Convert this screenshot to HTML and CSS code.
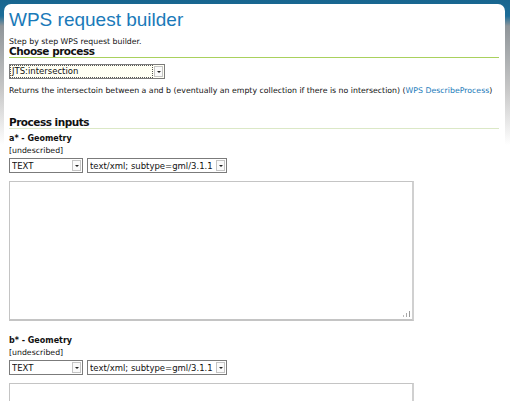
FILE: index.html
```html
<!DOCTYPE html>
<html>
<head>
<meta charset="utf-8">
<link rel="stylesheet" href="styles.css">
</head>
<body>
<div class="panel">
  <h1 class="title">WPS request builder</h1>
  <p class="intro">Step by step WPS request builder.</p>
  <h2 class="section section-process">Choose process</h2>
  <div class="row">
    <div class="select select-process focused"><span class="val">JTS:intersection</span><span class="arrow"></span></div>
  </div>
  <p class="desc">Returns the intersectoin between a and b (eventually an empty collection if there is no intersection) (<a class="link">WPS DescribeProcess</a>)</p>
  <h2 class="section section-inputs">Process inputs</h2>
  <div class="input">
    <h3 class="input-title">a* - Geometry</h3>
    <p class="input-desc">[undescribed]</p>
    <div class="row selects">
      <div class="select select-type"><span class="val">TEXT</span><span class="arrow"></span></div>
      <div class="select select-mime"><span class="val">text/xml; subtype=gml/3.1.1</span><span class="arrow"></span></div>
    </div>
    <div class="textarea"><span class="grip"></span></div>
  </div>
  <div class="input">
    <h3 class="input-title">b* - Geometry</h3>
    <p class="input-desc">[undescribed]</p>
    <div class="row selects">
      <div class="select select-type"><span class="val">TEXT</span><span class="arrow"></span></div>
      <div class="select select-mime"><span class="val">text/xml; subtype=gml/3.1.1</span><span class="arrow"></span></div>
    </div>
    <div class="textarea"><span class="grip"></span></div>
  </div>
</div>
</body>
</html>
```
FILE: styles.css
```css
html, body {
  margin: 0;
  padding: 0;
}
body {
  background: linear-gradient(to bottom, #18658f 0, #1c6d99 16px, #8f9599 26px, #c8c8c8 90px, #ffffff 145px);
  font-family: "DejaVu Sans", Verdana, sans-serif;
  color: #111;
  height: 401px;
  overflow: hidden;
}
.panel {
  margin: 4px 5px 0 4px;
  background: #fff;
  border-radius: 7px 7px 0 0;
  padding: 0 0 0 5px;
  min-height: 397px;
}
.title {
  margin: 0;
  padding-top: 5px;
  font-family: "Liberation Sans", Arial, sans-serif;
  font-weight: normal;
  font-size: 19px;
  line-height: 22px;
  color: #1a7ab9;
}
.intro {
  margin: 6px 0 0 0;
  font-size: 7.8px;
  line-height: 10px;
}
.section {
  margin: 0;
  font-size: 10.5px;
  letter-spacing: -0.5px;
  line-height: 10px;
  padding-bottom: 1px;
  font-weight: bold;
  color: #111;
  border-bottom: 1px solid #a9d15d;
  margin-right: 6px;
}
.section-process {
  margin-top: -1px;
}
.section-inputs {
  margin-top: 21px;
  border-bottom-color: #dbe8c6;
}
.row {
  display: flex;
  gap: 4px;
}
.select {
  display: flex;
  align-items: center;
  height: 15px;
  box-sizing: border-box;
  border: 1px solid #7b7b7b;
  background: #fff;
  font-size: 8.5px;
  padding-left: 2px;
  position: relative;
  color: #111;
}
.select .val {
  flex: 1;
  white-space: nowrap;
  overflow: hidden;
}
.select .arrow {
  width: 9px;
  height: 11px;
  margin-right: 1px;
  box-sizing: border-box;
  border: 1px solid #c4c4c4;
  background: #fafafa;
  position: relative;
  flex: none;
}
.select .arrow::after {
  content: "";
  position: absolute;
  left: 2px;
  top: 4px;
  border-left: 2px solid transparent;
  border-right: 2px solid transparent;
  border-top: 2px solid #222;
}
.select-process {
  margin-top: 6px;
  width: 156px;
  background: #fffff4;
}
.focused .val {
  outline: 1px dotted #555;
  outline-offset: 0;
  margin-right: 2px;
  line-height: 11px;
  padding-left: 1px;
  margin-left: -1px;
}
.desc {
  margin: 7px 0 0 0;
  font-size: 7.8px;
  line-height: 10px;
}
.link {
  color: #1a7ab9;
}
.input-title {
  margin: 5px 0 0 0;
  font-size: 8px;
  line-height: 10px;
  font-weight: bold;
}
.input-desc {
  margin: 2px 0 0 0;
  font-size: 7.8px;
  line-height: 10px;
}
.selects {
  margin-top: 2px;
}
.select-type {
  width: 74px;
}
.select-mime {
  width: 140px;
}
.textarea {
  margin-top: 8px;
  width: 405px;
  height: 140px;
  box-sizing: border-box;
  border: 1px solid #c4c4c4;
  border-right-width: 2px;
  border-bottom-width: 2px;
  border-right-color: #d0d0d0;
  border-bottom-color: #c4c4c4;
  position: relative;
}
.grip {
  position: absolute;
  right: 2px;
  bottom: 2px;
  width: 8px;
  height: 6px;
  background:
    linear-gradient(#999, #999) 7px 0 / 1px 6px no-repeat,
    linear-gradient(#aaa, #aaa) 4px 2px / 1px 4px no-repeat,
    linear-gradient(#bbb, #bbb) 1px 4px / 1px 2px no-repeat;
}
.input + .input .input-title {
  margin-top: 15px;
}
```
